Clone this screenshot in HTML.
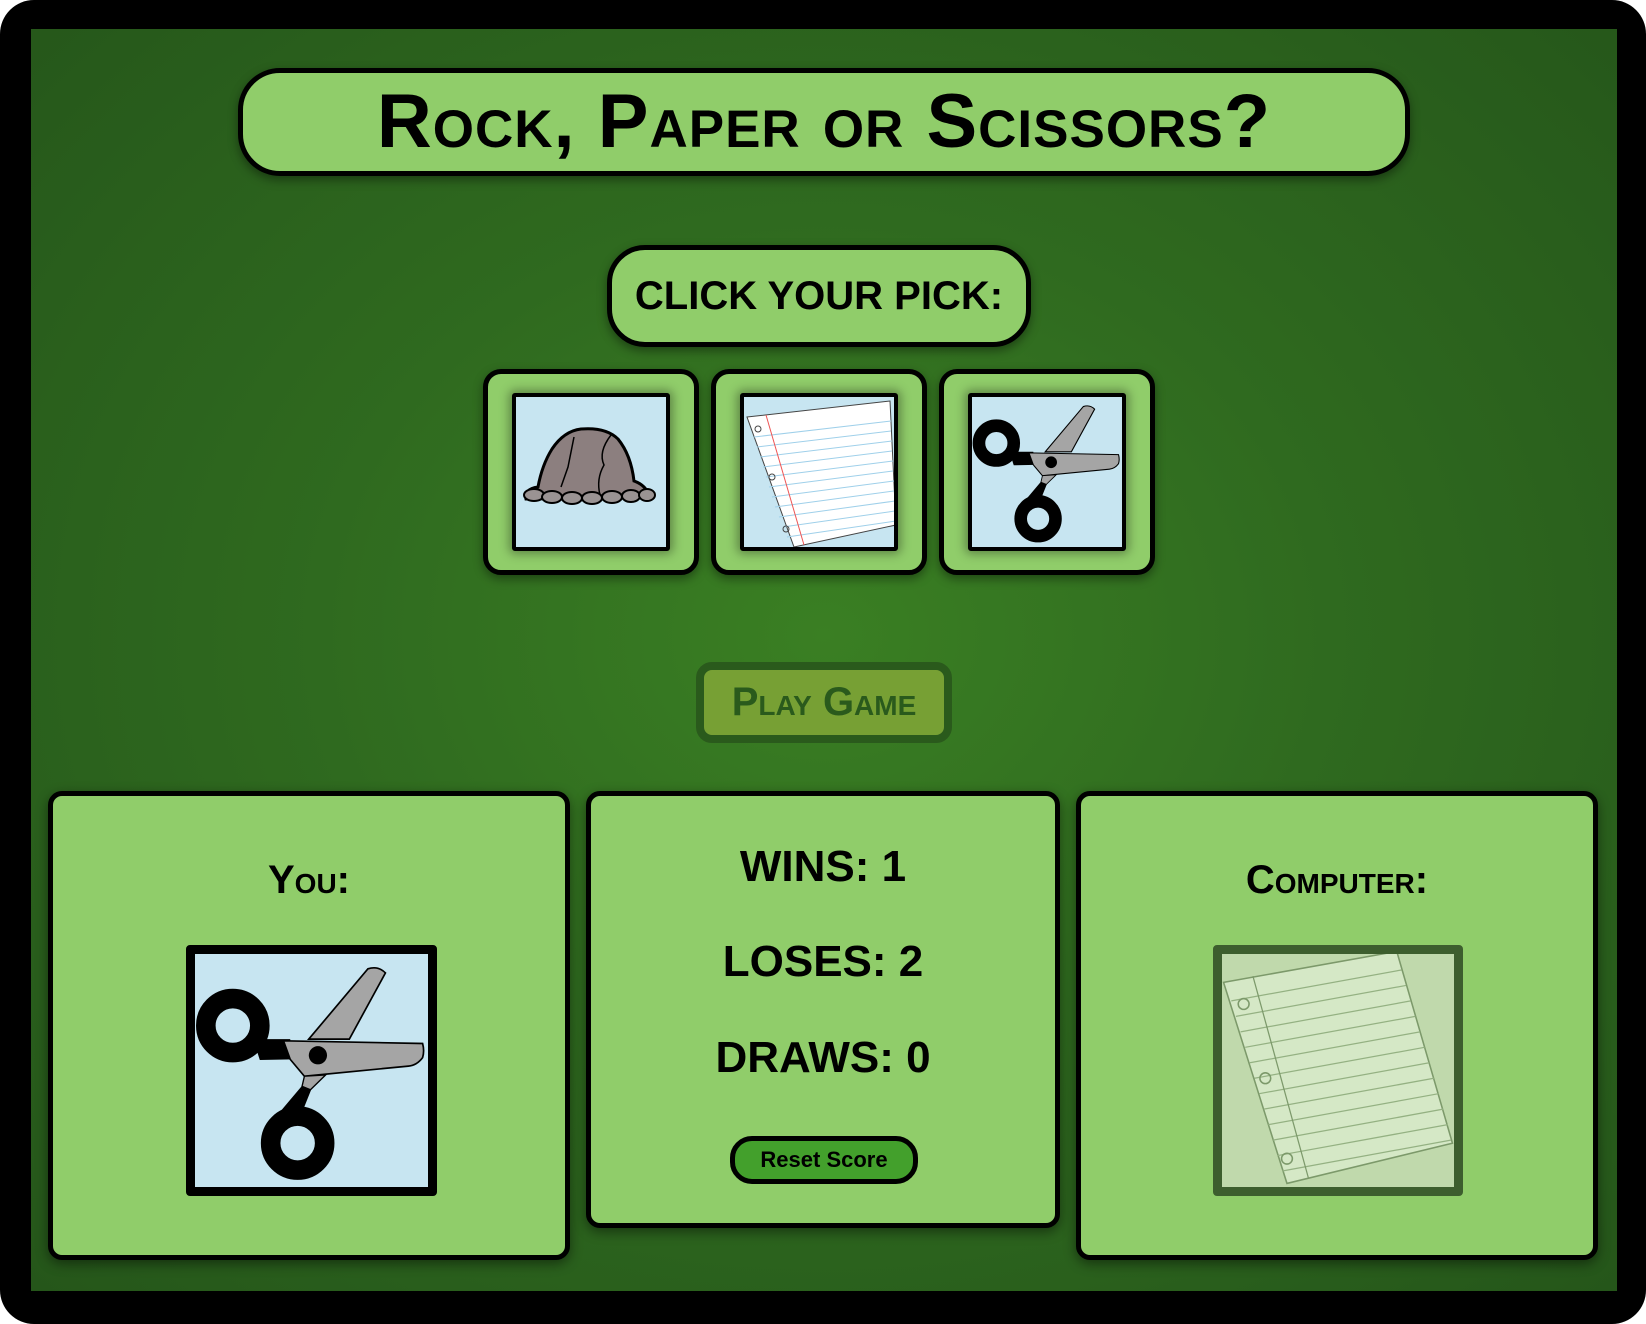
<!DOCTYPE html>
<html><head><meta charset="utf-8"><style>
*{margin:0;padding:0;box-sizing:border-box}
html,body{width:1646px;height:1324px;overflow:hidden;background:#fff}
body{font-family:"Liberation Sans",Arial,sans-serif;font-weight:bold;position:relative}
.frame{position:absolute;left:0;top:0;width:1646px;height:1324px;background:#000;border-radius:34px}
.bg{position:absolute;left:31px;top:29px;width:1586px;height:1262px;background:radial-gradient(ellipse at 50% 48%,#3a7f23 0%,#2f6a1f 45%,#25561a 100%)}
.a{position:absolute}
.box{position:absolute;background:#90cd6a;border:5px solid #000}
.title{left:238px;top:68px;width:1172px;height:108px;border-radius:42px;box-shadow:0 4px 10px rgba(0,0,0,.4);text-align:center;font-size:76px;line-height:98px;font-variant:small-caps;letter-spacing:1px}
.pick{left:607px;top:245px;width:424px;height:102px;border-radius:38px;text-align:center;font-size:40px;line-height:92px;box-shadow:0 4px 10px rgba(0,0,0,.4)}
.card{top:369px;width:216px;height:206px;border-radius:18px;box-shadow:0 4px 10px rgba(0,0,0,.4)}
.img{position:absolute;left:24px;top:19px;width:158px;height:158px;background:#c7e5f1;border:4px solid #000;border-radius:3px;box-shadow:0 0 10px 3px rgba(0,0,0,.35);overflow:hidden}
.img svg{width:100%;height:100%;display:block}
.play{left:696px;top:662px;width:256px;height:81px;border:8px solid #2a5a1c;border-radius:16px;background:#77a034;color:#2a5a1c;text-align:center;font-size:40px;line-height:64px;font-variant:small-caps}
.panel{top:791px;border-radius:14px;box-shadow:0 4px 12px rgba(0,0,0,.45)}
.lbl{position:absolute;left:0;right:0;text-align:center;font-size:40px;font-variant:small-caps}
.st{position:absolute;left:0;right:0;text-align:center;font-size:44px}
.reset{position:absolute;left:139px;top:340px;width:188px;height:48px;background:#43a02c;border:5px solid #000;border-radius:22px;text-align:center;font-size:22px;line-height:37px}
.big{position:absolute;left:133px;top:149px;width:251px;height:251px;background:#c7e5f1;border:9px solid #000;border-radius:4px}
.comp{position:absolute;left:132px;top:149px;width:250px;height:251px;background:#c0d9ac;border:9px solid #3d5e2e;border-radius:4px}
</style></head><body>
<div class="frame"></div>
<div class="bg"></div>
<div class="box title">Rock, Paper or Scissors?</div>
<div class="box pick">CLICK YOUR PICK:</div>

<svg width="0" height="0" style="position:absolute"><defs>
<g id="sc">
<circle cx="160" cy="290" r="80" fill="none" stroke="#000" stroke-width="58"/>
<path d="M220 330 L330 330 L335 390 L240 392 Z" fill="#000"/>
<path d="M385 330 L560 122 Q590 112 612 134 L505 330 Z" fill="#a5a5a5" stroke="#000" stroke-width="5"/>
<path d="M310 335 L722 343 Q728 365 722 385 Q705 408 680 410 L372 440 L330 390 Z" fill="#a5a5a5" stroke="#000" stroke-width="5"/>
<path d="M372 440 L435 436 L390 480 L365 470 Z" fill="#a5a5a5" stroke="#000" stroke-width="4"/>
<path d="M365 468 L392 480 L360 560 L300 545 Z" fill="#000"/>
<circle cx="352" cy="638" r="80" fill="none" stroke="#000" stroke-width="58"/>
<circle cx="412" cy="378" r="27" fill="#000"/>
</g>
</defs></svg>

<div class="box card a" style="left:483px"><div class="img"><svg viewBox="0 0 150 150">
<path d="M22 90 Q26 68 36 52 Q48 34 65 32 Q90 30 102 42 Q115 58 118 84 Q130 88 134 100 L10 102 Q8 92 22 90 Z" fill="#8c7f7f" stroke="#000" stroke-width="3"/>
<path d="M58 40 L52 70 L45 90 M95 38 Q82 55 88 68 Q80 82 84 98" fill="none" stroke="#000" stroke-width="1.5"/>
<g fill="#9a9393" stroke="#000" stroke-width="2"><ellipse cx="18" cy="98" rx="10" ry="6"/><ellipse cx="36" cy="100" rx="10" ry="6"/><ellipse cx="56" cy="101" rx="10" ry="6"/><ellipse cx="76" cy="101" rx="10" ry="6"/><ellipse cx="96" cy="100" rx="10" ry="6"/><ellipse cx="115" cy="99" rx="9" ry="6"/><ellipse cx="131" cy="98" rx="8" ry="6"/></g>
</svg></div></div>
<div class="box card a" style="left:711px"><div class="img"><svg viewBox="0 0 150 150">
<path d="M3 20 L146 4 L152 128 L50 150 Z" fill="#fff" stroke="#444" stroke-width="1"/>
<g stroke="#9fd0ea" stroke-width="1">
<line x1="10" y1="40" x2="147" y2="24"/><line x1="13" y1="50" x2="147" y2="34"/><line x1="16" y1="60" x2="148" y2="44"/><line x1="19" y1="70" x2="148" y2="54"/><line x1="22" y1="80" x2="149" y2="64"/><line x1="25" y1="90" x2="149" y2="74"/><line x1="28" y1="100" x2="150" y2="84"/><line x1="31" y1="110" x2="150" y2="94"/><line x1="35" y1="120" x2="151" y2="104"/><line x1="39" y1="130" x2="151" y2="114"/><line x1="43" y1="140" x2="152" y2="124"/></g>
<line x1="22" y1="18" x2="60" y2="148" stroke="#e55" stroke-width="1"/>
<circle cx="14" cy="32" r="3" fill="none" stroke="#444"/><circle cx="28" cy="80" r="3" fill="none" stroke="#444"/><circle cx="42" cy="132" r="3" fill="none" stroke="#444"/>
</svg></div></div>
<div class="box card a" style="left:939px"><div class="img"><svg viewBox="48 78 690 690"><use href="#sc"/></svg></div></div>

<div class="a play">Play Game</div>

<div class="box panel" style="left:48px;width:522px;height:469px">
<div class="lbl" style="top:62px">You:</div>
<div class="big"><svg viewBox="48 78 690 690" width="233" height="233"><use href="#sc"/></svg></div>
</div>
<div class="box panel" style="left:586px;width:474px;height:437px">
<div class="st" style="top:46px">WINS: 1</div>
<div class="st" style="top:141px">LOSES: 2</div>
<div class="st" style="top:237px">DRAWS: 0</div>
<div class="reset">Reset Score</div>
</div>
<div class="box panel" style="left:1076px;width:522px;height:469px">
<div class="lbl" style="top:62px">Computer:</div>
<div class="comp"><svg viewBox="0 0 150 150" width="232" height="233" style="opacity:.5">
<path d="M1 18 L113 -2 L149 122 L42 148 Z" fill="#eaf7e0" stroke="#3a5a2a" stroke-width="1"/>
<g stroke="#6a8a5a" stroke-width="0.8">
<line x1="6" y1="30" x2="116" y2="10"/><line x1="9" y1="40" x2="119" y2="20"/><line x1="12" y1="50" x2="122" y2="30"/><line x1="15" y1="60" x2="125" y2="40"/><line x1="18" y1="70" x2="128" y2="50"/><line x1="21" y1="80" x2="131" y2="60"/><line x1="24" y1="90" x2="134" y2="70"/><line x1="27" y1="100" x2="137" y2="80"/><line x1="30" y1="110" x2="140" y2="90"/><line x1="33" y1="120" x2="143" y2="100"/><line x1="36" y1="130" x2="146" y2="110"/><line x1="39" y1="140" x2="148" y2="120"/></g>
<line x1="20" y1="14" x2="56" y2="145" stroke="#3a5a2a" stroke-width="0.8"/>
<circle cx="14" cy="32" r="3.5" fill="none" stroke="#3a5a2a"/><circle cx="28" cy="80" r="3.5" fill="none" stroke="#3a5a2a"/><circle cx="42" cy="132" r="3.5" fill="none" stroke="#3a5a2a"/>
</svg></div>
</div>
</body></html>
